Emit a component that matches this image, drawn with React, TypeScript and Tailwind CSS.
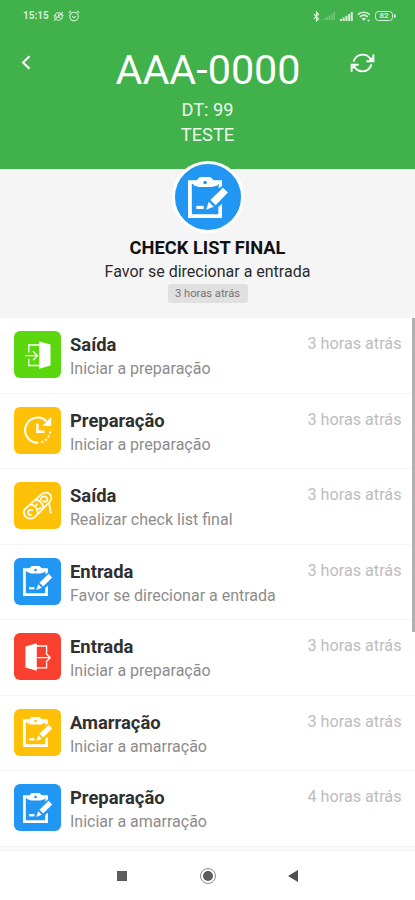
import React from 'react';

const ClipboardIcon = ({ className }: { className?: string }) => (
  <svg viewBox="0 0 30 30" className={className} fill="none">
    <path d="M24.9 6.6V2.3H0V30H24.9V19.6L22.2 22V27.3H2.8V5.2H22.5V8.4Z" fill="#fff" />
    <path d="M8.6 0H16.4L18.8 2.3L22 3.8V6L17.4 7.4H8L4 6V3.8L6.4 2.3Z" fill="#fff" />
    <circle cx="12.5" cy="4" r="1.3" className="fill-current" />
    <path d="M25.6 7.8L29.2 11.4L20.2 20.6L16.4 16.8Z" fill="#fff" />
    <path d="M15.2 18.2L18.8 21.8L13.3 23.9Z" fill="#fff" />
    <path d="M6.1 21.1H11.5V23.4H6.1Z" fill="#fff" />
  </svg>
);

const DoorInIcon = ({ className }: { className?: string }) => (
  <svg viewBox="0 0 30 30" className={className} fill="none" stroke="#fff" strokeWidth="1.3">
    <path d="M16 5H5.8V12.5M5.8 19V25.5H16" />
    <path d="M2.5 15.7H14M10 11.2L14.4 15.7L10 20.2" />
    <path d="M16.2 1.5L27.5 4.6V25.6L16.2 28.8Z" fill="#fff" stroke="none" />
  </svg>
);

const DoorOutIcon = ({ className }: { className?: string }) => (
  <svg viewBox="0 0 30 30" className={className} fill="none" stroke="#fff" strokeWidth="1.3">
    <path d="M13 4H23.6V11M23.6 20.5V25.8H13" />
    <path d="M14.5 15.7H27M22.8 11.2L27.3 15.7L22.8 20.2" />
    <path d="M13.8 1.3L2.4 4.4V25.6L13.8 28.8Z" fill="#fff" stroke="none" />
  </svg>
);

const ClockIcon = ({ className }: { className?: string }) => (
  <svg viewBox="0 0 30 30" className={className} fill="none" stroke="#fff" strokeWidth="2">
    <path d="M23.5 6.2A12.6 12.6 0 1 0 15 27.8" />
    <path d="M18.5 27.2A12.6 12.6 0 0 0 27.3 14" strokeDasharray="2 2.2" />
    <path d="M28.2 2V11H19.4Z" fill="#fff" stroke="none" />
    <path d="M14.4 8.4V16.8H21.5" strokeWidth="2.4" />
  </svg>
);

const RopeIcon = ({ className }: { className?: string }) => (
  <svg viewBox="0 0 30 30" className={className} fill="none" stroke="#fff" strokeWidth="1.7">
    <path d="M2.2 17.8L18.4 3.4C21.2 1 25.2 1.2 27.2 3.6C29 6 28.4 9.2 26.4 11.2L12 25.8C9.4 28.2 5.4 28.4 3 26C.6 23.6 .2 20.4 2.2 17.8Z" />
    <path d="M10 19.6C8.6 18 5.6 18.8 5.2 21.2C4.8 23.6 7.2 24.8 9 23.6" />
    <path d="M7.4 13.6C11.4 13.6 15.2 17.6 14.6 22.6M13 8.8C17.2 9.2 20.6 13 20.2 17.2" />
    <path d="M12 15L14.6 12.6M15.6 18.6L18 16.2" />
    <path d="M17.6 9.4C17.4 6.4 20.4 4.6 22.8 5.8C25.2 7 24.8 10.4 22.2 10.8C21 11 20.2 10.2 20.4 9M26 11.4L27.8 22.4" />
  </svg>
);

const icons = {
  clipboard: ClipboardIcon,
  doorIn: DoorInIcon,
  doorOut: DoorOutIcon,
  clock: ClockIcon,
  rope: RopeIcon,
};

interface Step {
  title: string;
  text: string;
  time: string;
  icon: keyof typeof icons;
  color: string;
}

const steps: Step[] = [
  { title: 'Saída', text: 'Iniciar a preparação', time: '3 horas atrás', icon: 'doorIn', color: 'bg-[#5bd80d] text-[#5bd80d]' },
  { title: 'Preparação', text: 'Iniciar a preparação', time: '3 horas atrás', icon: 'clock', color: 'bg-[#ffc107] text-[#ffc107]' },
  { title: 'Saída', text: 'Realizar check list final', time: '3 horas atrás', icon: 'rope', color: 'bg-[#ffc107] text-[#ffc107]' },
  { title: 'Entrada', text: 'Favor se direcionar a entrada', time: '3 horas atrás', icon: 'clipboard', color: 'bg-[#2196f3] text-[#2196f3]' },
  { title: 'Entrada', text: 'Iniciar a preparação', time: '3 horas atrás', icon: 'doorOut', color: 'bg-[#f9402f] text-[#f9402f]' },
  { title: 'Amarração', text: 'Iniciar a amarração', time: '3 horas atrás', icon: 'clipboard', color: 'bg-[#ffc107] text-[#ffc107]' },
  { title: 'Preparação', text: 'Iniciar a amarração', time: '4 horas atrás', icon: 'clipboard', color: 'bg-[#2196f3] text-[#2196f3]' },
];

const Signal = ({ className }: { className?: string }) => (
  <svg viewBox="0 0 13 9" className={className} fill="currentColor">
    <path d="M0 7H2V9H0ZM2.7 5.5H4.7V9H2.7ZM5.4 3.8H7.4V9H5.4ZM8.1 2H10.1V9H8.1ZM10.8 0H12.8V9H10.8Z" />
  </svg>
);

const StatusBar = () => (
  <div className="flex h-8 items-center pl-[23px] pr-[19px] text-[#d5f0d5]">
    <span className="w-[26px] text-[10px] font-bold leading-none">15:15</span>
    <svg viewBox="0 0 12 12" className="ml-[4px] size-[11px]" fill="none" stroke="currentColor" strokeWidth="1.1">
      <circle cx="6" cy="6" r="4.2" />
      <path d="M1 10.5L10.8 1.2M6 3.4V6.2L8.4 8M1 4.5L4 6M8.5 3.5L11.4 5" />
    </svg>
    <svg viewBox="0 0 12 12" className="ml-[4px] size-[12px]" fill="none" stroke="currentColor" strokeWidth="1.1">
      <circle cx="6" cy="6.6" r="4.3" />
      <path d="M.8 3L3 .9M11.2 3L9 .9M4.2 6.2L6 7.8L7.9 6.2" />
    </svg>
    <div className="ml-auto flex items-center">
      <svg viewBox="0 0 8 12" className="h-[11px] w-[7px]" fill="none" stroke="currentColor" strokeWidth="1.4">
        <path d="M1 3.3L6.4 8.6L4 11V1L6.4 3.4L1 8.7" />
      </svg>
      <Signal className="ml-[3px] h-[8px] w-[13px] opacity-30" />
      <Signal className="ml-[4px] h-[9px] w-[13px]" />
      <svg viewBox="0 0 14 11" className="ml-[4px] h-[11px] w-[14px]" fill="none" stroke="currentColor" strokeWidth="1.6">
        <path d="M.8 3.6C4.2 .4 9.4 .4 12.8 3.6M2.8 5.8C5.2 3.7 8.4 3.7 10.8 5.8" />
        <path d="M4.6 7.4C6 6.4 7.6 6.4 9 7.4L6.8 10Z" fill="currentColor" stroke="none" />
        <path d="M10.5 9.5H12.5" />
      </svg>
      <div className="ml-[4px] flex h-[10px] w-[18px] items-center justify-center rounded-[3.5px] border border-current text-[8px] font-bold leading-none">
        82
      </div>
      <div className="ml-px h-1 w-0.5 rounded-r-sm bg-current"></div>
    </div>
  </div>
);

const Header = () => (
  <header className="h-[169px] bg-[#40b14b] text-white">
    <StatusBar />
    <div className="flex justify-between pl-[21px] pr-[40px]">
      <svg viewBox="0 0 10 15" className="mt-[23px] h-[15px] w-[10px]" fill="none" stroke="currentColor" strokeWidth="2">
        <path d="M8.5 1.2L2 7.5L8.5 13.8" />
      </svg>
      <h1 className="ml-[35px] mt-[14px] text-[41.3px] leading-[48px]">AAA-0000</h1>
      <svg viewBox="0 0 24 20" className="mt-[21px] h-[20px] w-[25px]" fill="none" stroke="currentColor" strokeWidth="1.9">
        <path d="M3 8.6C4.4 4.4 8 1.6 12.1 1.6C15.6 1.6 18.4 3.2 20.4 6.4" />
        <path d="M22.9 1.2V8.3H15.8M19.4 7.4L22 4.8" />
        <path d="M21 11.4C19.6 15.6 16 18.4 11.9 18.4C8.4 18.4 5.6 16.8 3.6 13.6" />
        <path d="M1.1 18.8V11.7H8.2M4.6 12.6L2 15.2" />
      </svg>
    </div>
    <div className="mt-[3px] text-center text-[18.3px] leading-[25px] text-[#edf9ed]">
      <p>DT: 99</p>
      <p>TESTE</p>
    </div>
  </header>
);

const Current = () => (
  <section className="flex h-[149px] flex-col items-center bg-[#f5f5f5]">
    <div className="relative -mt-[8px] flex size-[72px] shrink-0 items-center justify-center rounded-full border-[3px] border-white bg-[#2196f3] text-[#2196f3]">
      <ClipboardIcon className="ml-[1px] mt-[1px] size-[41px]" />
    </div>
    <h2 className="mt-[3px] text-[18.3px] font-bold leading-[24px] text-[#111]">CHECK LIST FINAL</h2>
    <p className="text-[16px] leading-[23px] text-[#2b2b2b]">Favor se direcionar a entrada</p>
    <span className="mt-px flex h-[19px] w-[80px] items-center justify-center rounded-[3px] bg-[#e0e0e0] pt-px text-[11.2px] text-[#747474]">
      3 horas atrás
    </span>
  </section>
);

const StepRow = ({ step }: { step: Step }) => {
  const Icon = icons[step.icon];
  return (
    <li className="flex h-[75.5px] border-b border-[#f5f5f5] pl-[14px] pr-[13.5px] pt-[13px]">
      <div className={`flex size-[47px] shrink-0 items-center justify-center rounded-[6px] ${step.color}`}>
        <Icon className="size-[30px]" />
      </div>
      <div className="ml-[9px] flex-1">
        <h3 className="mt-[2px] text-[18.4px] font-bold leading-[24px] text-[#303030]">{step.title}</h3>
        <p className="text-[16px] leading-[23px] text-[#8c8c8c]">{step.text}</p>
      </div>
      <time className="mt-[2px] text-[16.2px] leading-[22px] text-[#bdbdbd]">{step.time}</time>
    </li>
  );
};

const NavBar = () => (
  <nav className="flex flex-1 items-center border-t border-[#f3f3f3] bg-white">
    <div className="ml-[117px] size-[10px] bg-[#5c5c5c]"></div>
    <div className="ml-[73px] flex size-[16px] items-center justify-center rounded-full border border-[#8a8a8a]">
      <div className="size-[10px] rounded-full bg-[#5c5c5c]"></div>
    </div>
    <svg viewBox="0 0 10 12" className="ml-[72px] h-[12px] w-[10px]" fill="#4f4f4f">
      <path d="M10 0V12L0 6Z" />
    </svg>
  </nav>
);

export default function App() {
  return (
    <div className="flex h-[900px] w-[415px] flex-col overflow-hidden bg-white font-[Roboto,sans-serif]">
      <Header />
      <Current />
      <main className="relative h-[532px] shrink-0 border-b-[3px] border-[#f9f9f9]">
        <ul>
          {steps.map((step, i) => (
            <StepRow key={i} step={step} />
          ))}
        </ul>
        {/* Scroll thumb */}
        <div className="absolute right-0 top-0 h-[314px] w-[3px] bg-[#b0b0b0]"></div>
      </main>
      <NavBar />
    </div>
  );
}
